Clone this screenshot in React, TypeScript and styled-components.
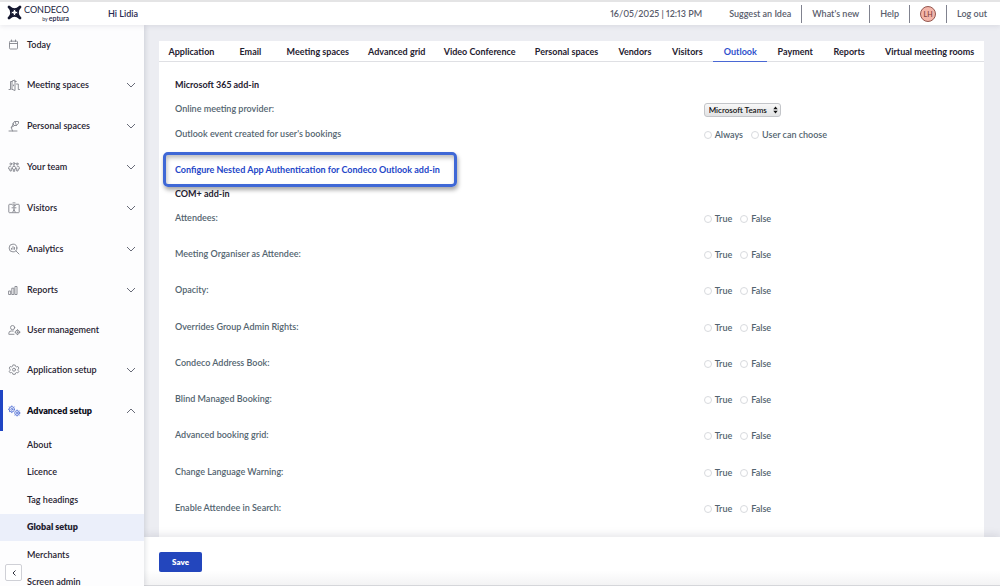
import React, { useState } from "react";
import styled, { createGlobalStyle, css } from "styled-components";

const GlobalStyle = createGlobalStyle`
  *, *::before, *::after { box-sizing: border-box; }
  body { margin: 0; font: 600 9px/12px Lato, "Liberation Sans", sans-serif; font-variant-numeric: proportional-nums; color: #1f2130; background: #ecedf2; }
  button, select, input { font: inherit; color: inherit; margin: 0; }
  a { color: inherit; text-decoration: none; }
  ul { list-style: none; margin: 0; padding: 0; }
  h2 { margin: 0; }
`;

const Page = styled.div`
  height: 100vh;
  display: flex;
  flex-direction: column;
  overflow: hidden;
`;

const Header = styled.header`
  flex: none;
  height: 25px;
  display: flex;
  align-items: center;
  padding: 0 8px 0 7px;
  background: #fff;
  border-top: 2px solid #e4e4e5;
  box-shadow: 0 1px 5px rgba(40, 44, 70, 0.1);
  z-index: 2;
`;

const Brand = styled.a`
  display: flex;
  align-items: flex-start;
  gap: 2px;
  width: 101px;
  color: #23263f;
`;

const BrandName = styled.span`
  display: flex;
  flex-direction: column;
  font-size: 9px;
  font-weight: 400;
  line-height: 10px;
`;

const BrandBy = styled.small`
  align-self: flex-end;
  font-size: 5px;
  line-height: 7px;
  b { font-size: 7px; font-weight: 600; }
`;

const Greeting = styled.span`
  color: #2a2b52;
`;

const TopNav = styled.nav`
  margin-left: auto;
  display: flex;
  align-items: center;
  color: #5a5d6c;
`;

const Clock = styled.time`
  margin-right: 17px;
`;

const TopCell = styled.span`
  display: flex;
  align-items: center;
  height: 18px;
  padding: 0 10px;
  & + & { border-left: 1px solid #80828f; }
  &:last-child { padding-right: 5px; }
`;

const Avatar = styled.button`
  width: 16px;
  height: 16px;
  padding: 0;
  border: 1px solid #94574f;
  border-radius: 50%;
  background: #f3b5a9;
  color: #85453f;
  font-size: 7px;
  line-height: 12px;
`;

const Body = styled.div`
  flex: 1;
  min-height: 0;
  display: flex;
`;

const Sidebar = styled.aside`
  position: relative;
  flex: none;
  width: 144px;
  overflow: hidden;
  background: #fdfdfe;
  box-shadow: 1px 0 5px rgba(40, 44, 70, 0.16);
  z-index: 1;
`;

const NavItem = styled.button<{ $plain?: boolean; $active?: boolean }>`
  display: flex;
  align-items: center;
  gap: 7px;
  width: 100%;
  height: ${(p) => (p.$plain ? 39 : 41)}px;
  padding: 0 8px 0 5px;
  border: 0;
  border-left: 3px solid ${(p) => (p.$active ? "#1f45c4" : "transparent")};
  background: none;
  text-align: left;
  font-weight: ${(p) => (p.$active ? 800 : 600)};
  color: ${(p) => (p.$active ? "#0c0e1a" : "#1f2130")};
`;

const NavIcon = styled.svg<{ $active?: boolean }>`
  flex: none;
  width: 12px;
  height: 12px;
  overflow: visible;
  fill: none;
  stroke: ${(p) => (p.$active ? "#5f7ad8" : "#82848c")};
  stroke-width: 0.9;
  stroke-linecap: round;
  stroke-linejoin: round;
`;

const Chevron = styled.svg<{ $up?: boolean }>`
  margin-left: auto;
  width: 10px;
  height: 6px;
  fill: none;
  stroke: #686b78;
  ${(p) => p.$up && css`transform: rotate(180deg);`}
`;

const SubMenu = styled.ul`
  display: grid;
  grid-auto-rows: 1fr;
  height: 165px;
`;

const SubLink = styled.a<{ $active?: boolean }>`
  display: flex;
  align-items: center;
  height: 100%;
  padding-left: 27px;
  font-weight: ${(p) => (p.$active ? 800 : 600)};
  background: ${(p) => (p.$active ? "#ebeffa" : "none")};
`;

const Collapse = styled.button`
  position: absolute;
  left: 5px;
  bottom: 5px;
  width: 17px;
  height: 17px;
  padding: 0;
  display: grid;
  place-items: center;
  border: 1px solid #cfd0d6;
  border-radius: 2px;
  background: #fff;
  svg { width: 4px; height: 6px; fill: none; stroke: #30323e; }
`;

const Main = styled.main`
  flex: 1;
  min-width: 0;
  display: flex;
  flex-direction: column;
`;

const Scroll = styled.div`
  flex: 1;
  min-height: 0;
  overflow: hidden;
  padding: 16px 16px 0 15px;
`;

const Panel = styled.section`
  background: #fff;
  min-height: 100%;
`;

const Tabs = styled.div`
  display: flex;
  height: 21px;
  border-bottom: 1px solid #dfe0e4;
`;

const Tab = styled.button<{ $weight: number; $active?: boolean }>`
  flex: ${(p) => p.$weight} 1 0;
  min-width: 0;
  height: 21px;
  padding: 1px 0 0;
  border: 0;
  border-bottom: 1px solid ${(p) => (p.$active ? "#4a68d4" : "transparent")};
  background: none;
  white-space: nowrap;
  font-weight: 700;
  color: ${(p) => (p.$active ? "#2f50cc" : "#1f2130")};
`;

const Settings = styled.div`
  padding: 17px 16px 0;
`;

const Heading = styled.h2`
  font-size: 9px;
  line-height: 12px;
  font-weight: 700;
`;

const Row = styled.div`
  display: grid;
  grid-template-columns: 2fr 1fr;
  align-items: start;
  color: #53646f;
`;

const Provider = styled(Row)`
  margin-top: 12px;
  height: 25px;
`;

const EventRow = styled(Row)`
  height: 24px;
`;

const SelectBox = styled.span`
  position: relative;
  justify-self: start;
  display: flex;
  svg { position: absolute; right: 3px; top: 3px; width: 5px; height: 8px; fill: #111; pointer-events: none; }
`;

const Select = styled.select`
  appearance: none;
  width: 77px;
  height: 14px;
  padding: 0 4px;
  border: 1px solid #c3c5c9;
  border-radius: 3px;
  background: linear-gradient(#f8f8f8, #e2e3e4);
  color: #111;
  font-size: 8px;
  line-height: 12px;
`;

const Choices = styled.span`
  display: flex;
  gap: 8px;
  padding-top: 1px;
`;

const Choice = styled.label`
  display: flex;
  align-items: center;
  gap: 3px;
  height: 12px;
`;

const Radio = styled.input`
  appearance: none;
  width: 8px;
  height: 8px;
  border: 1px solid #d8dade;
  border-radius: 50%;
  background: #fff;
  &:checked { border: 3px solid #2649c4; }
`;

const Configure = styled.a`
  display: flex;
  align-items: center;
  width: fit-content;
  min-width: 294px;
  height: 35px;
  margin: 0 0 1px -12px;
  padding: 0 9px;
  border: 3px solid #3f68d6;
  border-radius: 5px;
  color: #2346c8;
  font-weight: 700;
  box-shadow: 1px 3px 4px rgba(0, 0, 0, 0.35), inset 1px 3px 4px rgba(0, 0, 0, 0.25);
`;

const Options = styled.div`
  display: grid;
  grid-auto-rows: 1fr;
  height: 326px;
  margin-top: 12px;
`;

const Footer = styled.footer`
  flex: none;
  height: 49px;
  padding: 15px 15px 0;
  background: linear-gradient(#fff 70%, #f3f3f4);
  box-shadow: 0 -2px 8px rgba(40, 44, 70, 0.12);
  border-bottom: 1px solid #d5d6da;
`;

const Save = styled.button`
  width: 43px;
  height: 20px;
  padding: 0;
  border: 0;
  border-radius: 2px;
  background: #2346bd;
  color: #fff;
  font-size: 8px;
  font-weight: 800;
`;

const gear = "M6 1l1.200.1.4 1.300 1 .5 1.300-.4 1 1.600-.9 1v1.200l.9 1-1 1.600-1.300-.4-1 .5-.4 1.300H4.900l-.4-1.300-1-.5-1.300.4-1-1.600.9-1V5.100l-.9-1 1-1.600 1.300.4 1-.5.4-1.300z";

const icons: Record<string, React.ReactNode> = {
  Today: <path d="M1.500 3q0-.8.8-.8h6.400q.8 0 .8.800v6.200q0 .8-.8.8H2.300q-.8 0-.8-.8zM1.500 4.500h8M3.500 1v1.500M7.500 1v1.500" />,
  "Meeting spaces": <path d="M1 10.500h1.500V2.500h1.500M4 10.300V2L7 1v10.500L4 10.300M7 2.500h1.300M8.500 5h1.800v5.500h1.200M5.500 6v.8" />,
  "Personal spaces": <path d="M1 11h8M4.500 11L3.300 7.500L5 4.500M3.300 7.500L6.500 5.500M5 4q0-2 2-2.500l1.500 4Q5.500 6.500 5 4zM7 1.500h3.500v1.700L8.500 5.500" />,
  "Your team": (
    <>
      <circle cx="2.800" cy="2.900" r=".9" /><circle cx="6" cy="2.600" r="1" /><circle cx="9.200" cy="2.900" r=".9" />
      <path d="M6 5Q4.500 5 4.500 6.500V8h.8v2.300h1.400V8h.8V6.500Q7.500 5 6 5zM2.800 5Q.7 5 .7 6.600V8h1l.3 2h1.300V7M9.200 5q2.100 0 2.100 1.600V8h-1l-.3 2H8.700V7" />
    </>
  ),
  Visitors: (
    <>
      <path d="M4.300 2.300H1.500q-.7 0-.7.700v7q0 .7.700.7h9q.7 0 .7-.7V3q0-.7-.7-.7H7.700" />
      <circle cx="6" cy="3.500" r="1" />
      <path d="M4 5.800h4M6 5.800v1.700L4.800 10M6 7.500L7.200 10M5 .9h2" />
    </>
  ),
  Analytics: (
    <>
      <circle cx="5" cy="5" r="3.900" />
      <path d="M8 8l3 3M3.500 6.300v-1M5 6.300v-2.800M6.500 6.300v-1.800" />
    </>
  ),
  Reports: <path d="M1 7h1.700v3.500H1zM4.200 4.200h1.700v6.300H4.200zM7.300 2.500H9v8H7.300z" />,
  "User management": (
    <>
      <circle cx="4.600" cy="3.600" r="2.100" />
      <path d="M6 10.300H.8V9.300Q.8 7 3.300 7h2" />
      <circle cx="9.500" cy="8.200" r="2" /><circle cx="9.500" cy="8.200" r=".5" />
      <path d="M9.500 5.700v.5M9.500 10.200v.5M7 8.200h.5M11.500 8.200h.5" />
    </>
  ),
  "Application setup": <><path d={gear} /><circle cx="6" cy="5.700" r="1.500" /></>,
  "Advanced setup": (
    <>
      <circle cx="3.800" cy="4.300" r="2.700" /><circle cx="3.800" cy="4.300" r="1" />
      <path d="M3.800.9v.7M3.800 7v.7M.4 4.300h.7M1.400 1.900l.5.500M6.200 1.900l-.5.500M1.400 6.700l.5-.5" />
      <circle cx="9.100" cy="8" r="2.400" /><circle cx="9.100" cy="8" r=".9" />
      <path d="M9.100 5v.6M9.100 10.400v.6M11.500 8h.6M7 10.100l.4-.4M11.200 5.900l-.4.4M11.200 10.100l-.4-.4" />
    </>
  ),
};

const navItems = Object.keys(icons);
const plainItems = ["Today", "User management"];
const subItems = ["About", "Licence", "Tag headings", "Global setup", "Merchants", "Screen admin"];

const tabs: [string, number][] = [
  ["Application", 65], ["Email", 53], ["Meeting spaces", 82], ["Advanced grid", 76],
  ["Video Conference", 90], ["Personal spaces", 84], ["Vendors", 53], ["Visitors", 52],
  ["Outlook", 54], ["Payment", 56], ["Reports", 52], ["Virtual meeting rooms", 109],
];

const options = [
  "Attendees:", "Meeting Organiser as Attendee:", "Opacity:", "Overrides Group Admin Rights:",
  "Condeco Address Book:", "Blind Managed Booking:", "Advanced booking grid:",
  "Change Language Warning:", "Enable Attendee in Search:",
];

function RadioPair({ name, values }: { name: string; values: string[] }) {
  return (
    <Choices role="radiogroup" aria-label={name}>
      {values.map((v) => (
        <Choice key={v}>
          <Radio type="radio" name={name} value={v} />
          {v}
        </Choice>
      ))}
    </Choices>
  );
}

export default function App() {
  const [tab, setTab] = useState("Outlook");
  return (
    <Page>
      <GlobalStyle />
      <Header>
        <Brand href="#home" aria-label="Condeco by Eptura">
          <svg width="15" height="15" viewBox="0 0 15 15" fill="none" stroke="#14172f" strokeLinejoin="round" strokeLinecap="round">
            <path d="M2.500 2.300Q7.500 6 12.500 2.300Q9.500 7.500 12.500 12.700Q7.500 9 2.500 12.700Q5.500 7.500 2.500 2.300z" strokeWidth="1.800" />
            <path d="M2 2l3.500 3.500M13 2L9.500 5.500M2 13l3.500-3.500M13 13L9.500 9.500" strokeWidth="2.800" />
          </svg>
          <BrandName>
            CONDECO
            <BrandBy>by <b>eptura</b></BrandBy>
          </BrandName>
        </Brand>
        <Greeting>Hi Lidia</Greeting>
        <TopNav>
          <Clock>16/05/2025 | 12:13 PM</Clock>
          <TopCell><a href="#idea">Suggest an Idea</a></TopCell>
          <TopCell><a href="#new">What's new</a></TopCell>
          <TopCell><a href="#help">Help</a></TopCell>
          <TopCell><Avatar>LH</Avatar></TopCell>
          <TopCell><a href="#logout">Log out</a></TopCell>
        </TopNav>
      </Header>
      <Body>
        <Sidebar>
          {navItems.map((name) => {
            const active = name === "Advanced setup";
            const plain = plainItems.includes(name);
            return (
              <NavItem key={name} $plain={plain} $active={active}>
                <NavIcon viewBox="0 0 12 12" $active={active}>{icons[name]}</NavIcon>
                {name}
                {!plain && (
                  <Chevron viewBox="0 0 10 6" $up={active}><path d="M1 1l4 4 4-4" /></Chevron>
                )}
              </NavItem>
            );
          })}
          <SubMenu>
            {subItems.map((s) => (
              <li key={s}><SubLink href="#setup" $active={s === "Global setup"}>{s}</SubLink></li>
            ))}
          </SubMenu>
          <Collapse aria-label="Collapse menu"><svg viewBox="0 0 4 6"><path d="M3.500 .5L1 3l2.500 2.500" /></svg></Collapse>
        </Sidebar>
        <Main>
          <Scroll>
            <Panel>
              <Tabs role="tablist">
                {tabs.map(([t, w]) => (
                  <Tab key={t} role="tab" aria-selected={t === tab} $weight={w} $active={t === tab} onClick={() => setTab(t)}>{t}</Tab>
                ))}
              </Tabs>
              <Settings>
                <Heading>Microsoft 365 add-in</Heading>
                <Provider>
                  <label htmlFor="provider">Online meeting provider:</label>
                  <SelectBox>
                    <Select id="provider"><option>Microsoft Teams</option></Select>
                    <svg viewBox="0 0 5 8"><path d="M2.500 .5L4.700 3.300H.3zM2.500 7.500L.3 4.700h4.400z" /></svg>
                  </SelectBox>
                </Provider>
                <EventRow>
                  <span>Outlook event created for user's bookings</span>
                  <RadioPair name="Outlook event" values={["Always", "User can choose"]} />
                </EventRow>
                <Configure href="#configure">Configure Nested App Authentication for Condeco Outlook add-in</Configure>
                <Heading>COM+ add-in</Heading>
                <Options>
                  {options.map((o) => (
                    <Row key={o}>
                      <span>{o}</span>
                      <RadioPair name={o} values={["True", "False"]} />
                    </Row>
                  ))}
                </Options>
              </Settings>
            </Panel>
          </Scroll>
          <Footer><Save>Save</Save></Footer>
        </Main>
      </Body>
    </Page>
  );
}
